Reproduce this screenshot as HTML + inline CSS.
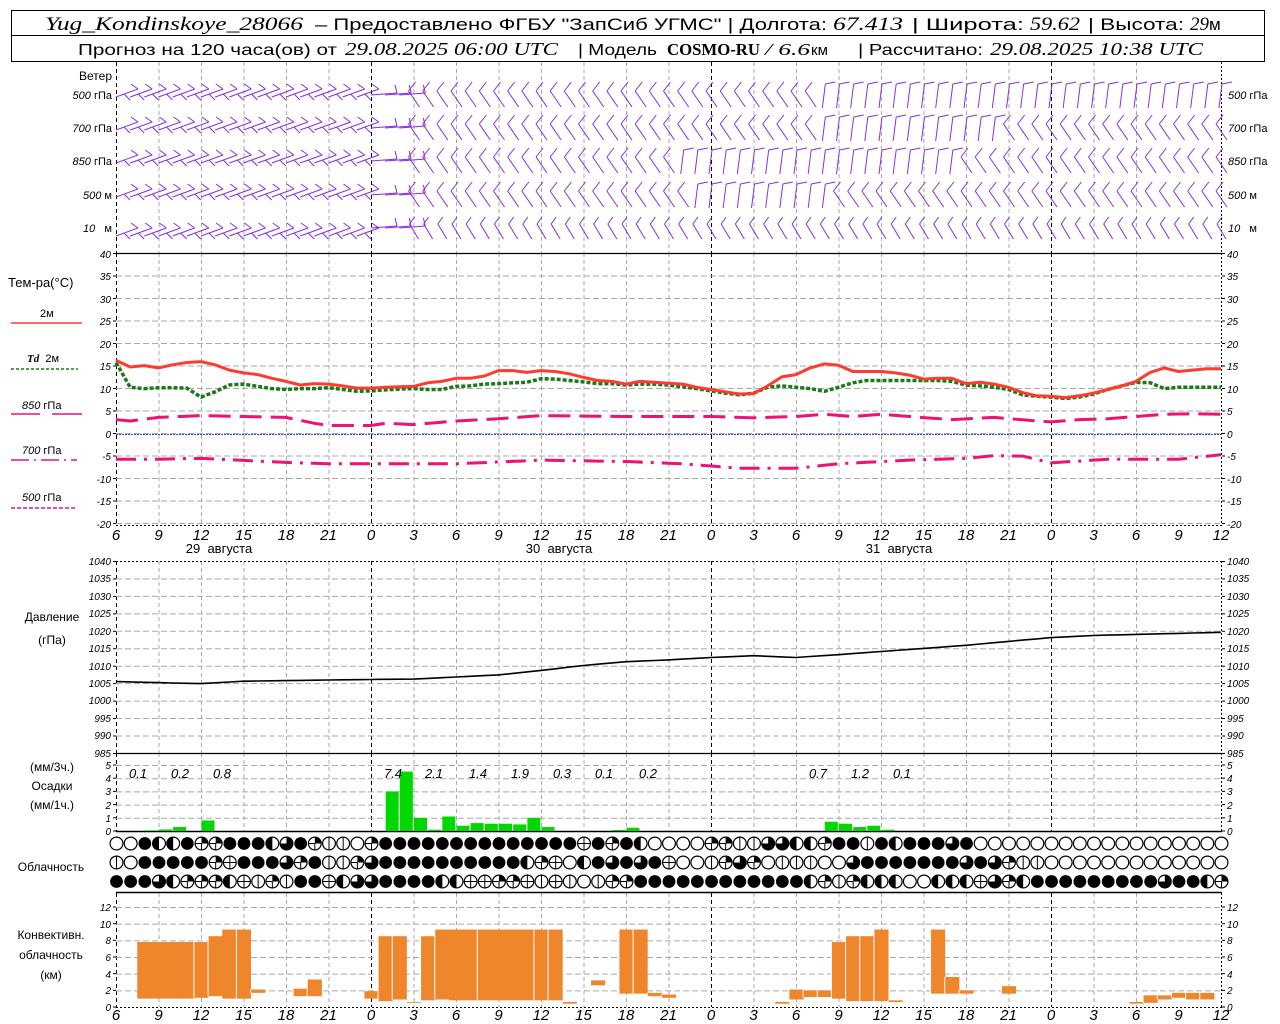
<!DOCTYPE html>
<html><head><meta charset="utf-8"><style>
html,body{margin:0;padding:0;background:#fff;width:1280px;height:1024px;overflow:hidden}
svg{display:block}
text{font-family:"Liberation Sans","DejaVu Sans",sans-serif;fill:#000}
.i{font-style:italic}
.s{font-family:"Liberation Serif","DejaVu Serif",serif}
.tk{font-size:10px;font-style:italic}
.tl{font-size:15px;font-style:italic}
.lb{font-size:12px}
</style></head><body>
<svg id="s" width="1280" height="1024" viewBox="0 0 1280 1024" xmlns="http://www.w3.org/2000/svg">
<rect x="11.5" y="10.5" width="1253" height="51" fill="none" stroke="#000"/>
<line x1="11" y1="35.5" x2="1265" y2="35.5" stroke="#000"/>
<text x="45" y="30" class="s i" font-size="19" textLength="258" lengthAdjust="spacingAndGlyphs">Yug_Kondinskoye_28066</text>
<text x="315" y="30" font-size="17" textLength="512" lengthAdjust="spacingAndGlyphs">– Предоставлено ФГБУ "ЗапСиб УГМС" | Долгота:</text>
<text x="833" y="30" class="s i" font-size="19" textLength="70" lengthAdjust="spacingAndGlyphs">67.413</text>
<text x="912" y="30" font-size="17" textLength="112" lengthAdjust="spacingAndGlyphs">| Широта:</text>
<text x="1030" y="30" class="s i" font-size="19" textLength="50" lengthAdjust="spacingAndGlyphs">59.62</text>
<text x="1088" y="30" font-size="17" textLength="96" lengthAdjust="spacingAndGlyphs">| Высота:</text>
<text x="1190" y="30" class="s i" font-size="19">29</text><text x="1209" y="30" font-size="17">м</text>
<text x="78" y="55" font-size="16" textLength="259" lengthAdjust="spacingAndGlyphs">Прогноз на 120 часа(ов) от</text>
<text x="345" y="55" class="s i" font-size="18" textLength="213" lengthAdjust="spacingAndGlyphs">29.08.2025 06:00 UTC</text>
<text x="578" y="55" font-size="16" textLength="79" lengthAdjust="spacingAndGlyphs">| Модель</text>
<text x="667" y="55" class="s" font-weight="bold" font-size="17" textLength="93" lengthAdjust="spacingAndGlyphs">COSMO-RU</text>
<text x="765" y="55" class="s i" font-size="17" textLength="45" lengthAdjust="spacingAndGlyphs">/ 6.6</text><text x="811" y="55" font-size="15">км</text>
<text x="858" y="55" font-size="16" textLength="125" lengthAdjust="spacingAndGlyphs">| Рассчитано:</text>
<text x="990" y="55" class="s i" font-size="18" textLength="213" lengthAdjust="spacingAndGlyphs">29.08.2025 10:38 UTC</text>

<g id="grid"></g>
<g id="plots"></g>

<text x="112" y="80" font-size="12" text-anchor="end">Ветер</text>
<text x="112" y="99" font-size="11" text-anchor="end"><tspan class="i">500</tspan> гПа</text>
<text x="112" y="132" font-size="11" text-anchor="end"><tspan class="i">700</tspan> гПа</text>
<text x="112" y="165" font-size="11" text-anchor="end"><tspan class="i">850</tspan> гПа</text>
<text x="112" y="199" font-size="11" text-anchor="end"><tspan class="i">500</tspan> м</text>
<text x="112" y="232" font-size="11" text-anchor="end"><tspan class="i">10</tspan>&#160;&#160;&#160;м</text>
<text x="1228" y="99" font-size="11"><tspan class="i">500</tspan> гПа</text>
<text x="1228" y="132" font-size="11"><tspan class="i">700</tspan> гПа</text>
<text x="1228" y="165" font-size="11"><tspan class="i">850</tspan> гПа</text>
<text x="1228" y="199" font-size="11"><tspan class="i">500</tspan> м</text>
<text x="1228" y="232" font-size="11"><tspan class="i">10</tspan>&#160;&#160;&#160;м</text>

<text x="8" y="287" font-size="13">Тем-ра(°C)</text>
<text x="40" y="317" font-size="11">2м</text>
<line x1="11" y1="323" x2="82" y2="323" stroke="#ff3b30" stroke-width="1.5"/>
<text x="27" y="362" font-size="11"><tspan class="i s" font-weight="bold">Td</tspan>&#160;&#160;2м</text>
<line x1="11" y1="369" x2="78" y2="369" stroke="#1a7a1a" stroke-width="1.5" stroke-dasharray="3,2"/>
<text x="22" y="409" font-size="11"><tspan class="i">850</tspan>&#160;гПа</text>
<line x1="11" y1="414" x2="40" y2="414" stroke="#ee1177" stroke-width="1.5"/><line x1="52" y1="414" x2="82" y2="414" stroke="#ee1177" stroke-width="1.5"/>
<text x="22" y="454" font-size="11"><tspan class="i">700</tspan>&#160;гПа</text>
<line x1="11" y1="460" x2="77" y2="460" stroke="#ee1177" stroke-width="1.5" stroke-dasharray="18,5,2,5"/>
<text x="22" y="501" font-size="11"><tspan class="i">500</tspan>&#160;гПа</text>
<line x1="11" y1="508" x2="77" y2="508" stroke="#ee1177" stroke-width="1.5" stroke-dasharray="4,2"/>

<text x="219" y="553" font-size="13" text-anchor="middle">29&#160;&#160;августа</text>
<text x="559" y="553" font-size="13" text-anchor="middle">30&#160;&#160;августа</text>
<text x="899" y="553" font-size="13" text-anchor="middle">31&#160;&#160;августа</text>

<text x="52" y="621" font-size="12" text-anchor="middle">Давление</text>
<text x="52" y="644" font-size="12" text-anchor="middle">(гПа)</text>
<text x="52" y="771" font-size="12" text-anchor="middle">(мм/3ч.)</text>
<text x="52" y="790" font-size="12" text-anchor="middle">Осадки</text>
<text x="52" y="809" font-size="12" text-anchor="middle">(мм/1ч.)</text>
<text x="51" y="871" font-size="12" text-anchor="middle">Облачность</text>
<text x="51" y="939" font-size="12" text-anchor="middle">Конвективн.</text>
<text x="51" y="959" font-size="12" text-anchor="middle">облачность</text>
<text x="51" y="979" font-size="12" text-anchor="middle">(км)</text>

<g font-size="13" font-style="italic">
<text x="138" y="778" text-anchor="middle">0.1</text>
<text x="180" y="778" text-anchor="middle">0.2</text>
<text x="222" y="778" text-anchor="middle">0.8</text>
<text x="393" y="778" text-anchor="middle">7.4</text>
<text x="434" y="778" text-anchor="middle">2.1</text>
<text x="478" y="778" text-anchor="middle">1.4</text>
<text x="520" y="778" text-anchor="middle">1.9</text>
<text x="562" y="778" text-anchor="middle">0.3</text>
<text x="604" y="778" text-anchor="middle">0.1</text>
<text x="648" y="778" text-anchor="middle">0.2</text>
<text x="818" y="778" text-anchor="middle">0.7</text>
<text x="860" y="778" text-anchor="middle">1.2</text>
<text x="902" y="778" text-anchor="middle">0.1</text>
</g>

<g class="tl">
<text x="116" y="540" text-anchor="middle">6</text><text x="158.5" y="540" text-anchor="middle">9</text><text x="201" y="540" text-anchor="middle">12</text><text x="243.5" y="540" text-anchor="middle">15</text><text x="286" y="540" text-anchor="middle">18</text><text x="328.5" y="540" text-anchor="middle">21</text><text x="371" y="540" text-anchor="middle">0</text><text x="413.5" y="540" text-anchor="middle">3</text><text x="456" y="540" text-anchor="middle">6</text><text x="498.5" y="540" text-anchor="middle">9</text><text x="541" y="540" text-anchor="middle">12</text><text x="583.5" y="540" text-anchor="middle">15</text><text x="626" y="540" text-anchor="middle">18</text><text x="668.5" y="540" text-anchor="middle">21</text><text x="711" y="540" text-anchor="middle">0</text><text x="753.5" y="540" text-anchor="middle">3</text><text x="796" y="540" text-anchor="middle">6</text><text x="838.5" y="540" text-anchor="middle">9</text><text x="881" y="540" text-anchor="middle">12</text><text x="923.5" y="540" text-anchor="middle">15</text><text x="966" y="540" text-anchor="middle">18</text><text x="1008.5" y="540" text-anchor="middle">21</text><text x="1051" y="540" text-anchor="middle">0</text><text x="1093.5" y="540" text-anchor="middle">3</text><text x="1136" y="540" text-anchor="middle">6</text><text x="1178.5" y="540" text-anchor="middle">9</text><text x="1221" y="540" text-anchor="middle">12</text>
<text x="116" y="1020" text-anchor="middle">6</text><text x="158.5" y="1020" text-anchor="middle">9</text><text x="201" y="1020" text-anchor="middle">12</text><text x="243.5" y="1020" text-anchor="middle">15</text><text x="286" y="1020" text-anchor="middle">18</text><text x="328.5" y="1020" text-anchor="middle">21</text><text x="371" y="1020" text-anchor="middle">0</text><text x="413.5" y="1020" text-anchor="middle">3</text><text x="456" y="1020" text-anchor="middle">6</text><text x="498.5" y="1020" text-anchor="middle">9</text><text x="541" y="1020" text-anchor="middle">12</text><text x="583.5" y="1020" text-anchor="middle">15</text><text x="626" y="1020" text-anchor="middle">18</text><text x="668.5" y="1020" text-anchor="middle">21</text><text x="711" y="1020" text-anchor="middle">0</text><text x="753.5" y="1020" text-anchor="middle">3</text><text x="796" y="1020" text-anchor="middle">6</text><text x="838.5" y="1020" text-anchor="middle">9</text><text x="881" y="1020" text-anchor="middle">12</text><text x="923.5" y="1020" text-anchor="middle">15</text><text x="966" y="1020" text-anchor="middle">18</text><text x="1008.5" y="1020" text-anchor="middle">21</text><text x="1051" y="1020" text-anchor="middle">0</text><text x="1093.5" y="1020" text-anchor="middle">3</text><text x="1136" y="1020" text-anchor="middle">6</text><text x="1178.5" y="1020" text-anchor="middle">9</text><text x="1221" y="1020" text-anchor="middle">12</text>
</g>

<g class="tk">
<text x="111" y="258" text-anchor="end">40</text><text x="111" y="280" text-anchor="end">35</text><text x="111" y="303" text-anchor="end">30</text><text x="111" y="325" text-anchor="end">25</text><text x="111" y="348" text-anchor="end">20</text><text x="111" y="370" text-anchor="end">15</text><text x="111" y="393" text-anchor="end">10</text><text x="111" y="415" text-anchor="end">5</text><text x="111" y="438" text-anchor="end">0</text><text x="111" y="460" text-anchor="end">-5</text><text x="111" y="483" text-anchor="end">-10</text><text x="111" y="505" text-anchor="end">-15</text><text x="111" y="528" text-anchor="end">-20</text>
<text x="1227" y="258">40</text><text x="1227" y="280">35</text><text x="1227" y="303">30</text><text x="1227" y="325">25</text><text x="1227" y="348">20</text><text x="1227" y="370">15</text><text x="1227" y="393">10</text><text x="1227" y="415">5</text><text x="1227" y="438">0</text><text x="1227" y="460">-5</text><text x="1227" y="483">-10</text><text x="1227" y="505">-15</text><text x="1227" y="528">-20</text>
<text x="111" y="565" text-anchor="end">1040</text><text x="111" y="582" text-anchor="end">1035</text><text x="111" y="600" text-anchor="end">1030</text><text x="111" y="617" text-anchor="end">1025</text><text x="111" y="635" text-anchor="end">1020</text><text x="111" y="652" text-anchor="end">1015</text><text x="111" y="670" text-anchor="end">1010</text><text x="111" y="687" text-anchor="end">1005</text><text x="111" y="704" text-anchor="end">1000</text><text x="111" y="722" text-anchor="end">995</text><text x="111" y="739" text-anchor="end">990</text><text x="111" y="757" text-anchor="end">985</text>
<text x="1227" y="565">1040</text><text x="1227" y="582">1035</text><text x="1227" y="600">1030</text><text x="1227" y="617">1025</text><text x="1227" y="635">1020</text><text x="1227" y="652">1015</text><text x="1227" y="670">1010</text><text x="1227" y="687">1005</text><text x="1227" y="704">1000</text><text x="1227" y="722">995</text><text x="1227" y="739">990</text><text x="1227" y="757">985</text>
<text x="111" y="769" text-anchor="end">5</text><text x="111" y="782" text-anchor="end">4</text><text x="111" y="795" text-anchor="end">3</text><text x="111" y="809" text-anchor="end">2</text><text x="111" y="822" text-anchor="end">1</text><text x="111" y="835" text-anchor="end">0</text>
<text x="1227" y="769">5</text><text x="1227" y="782">4</text><text x="1227" y="795">3</text><text x="1227" y="809">2</text><text x="1227" y="822">1</text><text x="1227" y="835">0</text>
<text x="111" y="911" text-anchor="end">12</text><text x="111" y="928" text-anchor="end">10</text><text x="111" y="944" text-anchor="end">8</text><text x="111" y="961" text-anchor="end">6</text><text x="111" y="978" text-anchor="end">4</text><text x="111" y="994" text-anchor="end">2</text><text x="111" y="1011" text-anchor="end">0</text>
<text x="1227" y="911">12</text><text x="1227" y="928">10</text><text x="1227" y="944">8</text><text x="1227" y="961">6</text><text x="1227" y="978">4</text><text x="1227" y="994">2</text><text x="1227" y="1011">0</text>
</g>
</svg>
<script>
(function(){
var NS="http://www.w3.org/2000/svg";
var G=document.getElementById("grid"),P=document.getElementById("plots");
function el(g,t,a){var e=document.createElementNS(NS,t);for(var k in a)e.setAttribute(k,a[k]);g.appendChild(e);return e;}
function X(h){return 116+h*14.1667;}
function line(g,x1,y1,x2,y2,c,w,d){var a={x1:x1,y1:y1,x2:x2,y2:y2,stroke:c,"stroke-width":w||1};if(d)a["stroke-dasharray"]=d;return el(g,"line",a);}
function vgrid(y1,y2){for(var k=0;k<=24;k++){var h=3*k;var x=X(h)+.5;var day=((h+6)%24==0)||k==0;line(G,x,y1,x,y2,day?"#000":"#aaa",1,"4,3");}line(G,X(78)+.5,y1,X(78)+.5,y2,"#000",1,"2,2");}
vgrid(62,253);vgrid(253,525);vgrid(561,753);vgrid(753,831);vgrid(893,1007);
for(var i=1;i<=12;i++){line(G,116,253.5+i*22.5,1222,253.5+i*22.5,"#aaa",1,"6,3");}
for(i=1;i<12;i++){line(G,116,561.5+i*17.45,1222,561.5+i*17.45,"#aaa",1,"6,3");}
for(i=1;i<=5;i++){line(G,116,831.5-i*13.2,1222,831.5-i*13.2,"#aaa",1,"6,3");}
for(i=1;i<=6;i++){line(G,116,1007.5-i*16.67,1222,1007.5-i*16.67,"#aaa",1,"6,3");}
line(G,116,253.5,1222,253.5,"#000",1.2);line(G,116,525.5,1222,525.5,"#000",1,"2,2");
line(G,116,561.5,1222,561.5,"#000",1,"2,2");line(G,116,753.5,1222,753.5,"#000",1.2);
line(G,116,831.5,1222,831.5,"#000",1.5);line(G,116,892.5,1222,892.5,"#000",1.5);line(G,116,1007.5,1222,1007.5,"#000",1,"2,2");
line(G,116,434.5,1222,434.5,"#2244ff",1,"2,1");
function ticks(y0,y1,step){for(var y=y0;y<=y1+0.1;y+=step){line(G,113,y,116,y,"#000");line(G,1222,y,1225,y,"#000");}}
ticks(253.5,526,22.5);ticks(561.5,754,17.45);ticks(765,832,13.2);ticks(907,1008,16.67);
function interp(kp){var r=[];for(var h=0;h<=78;h++){for(var j=0;j<kp.length-1;j++){if(h>=kp[j][0]&&h<=kp[j+1][0]){var t=(h-kp[j][0])/(kp[j+1][0]-kp[j][0]||1);r.push(kp[j][1]+t*(kp[j+1][1]-kp[j][1]));break;}}}return r;}
function poly(vals,fy,c,w,d){var p=[];for(var h=0;h<vals.length;h++)p.push(X(h).toFixed(1)+","+fy(vals[h]).toFixed(1));var a={points:p.join(" "),fill:"none",stroke:c,"stroke-width":w,"stroke-linejoin":"round"};if(d)a["stroke-dasharray"]=d;el(P,"polyline",a);}
var TY=function(v){return 434.5-4.5*v;};
var T=[16.5,15,15.3,14.8,15.5,16,16.2,15.5,14.3,13.7,13.3,12.5,11.8,11,11.3,11.2,10.8,10.3,
10.3,10.5,10.6,10.7,11.5,11.8,12.5,12.5,13,14.2,14.2,13.8,14.2,14,13.5,12.7,12,11.8,11.2,11.8,11.6,11.4,11.2,10.5,
10,9.5,9,9.1,10.8,12.8,13.3,14.8,15.7,15.4,14,14,14,13.7,13.2,12.3,12.5,12.5,11.3,11.6,11.2,10.5,9.3,8.6,
8.5,8.2,8.6,9.2,10,10.8,11.8,13.8,14.8,14,14.3,14.6,14.6];
var Td=[16,10.5,10.2,10.4,10.4,10.3,8.3,9.5,11,11.2,10.7,10.2,10,10.2,10.2,10.4,10,9.6,
9.7,9.9,10.1,10.2,10,10,10.7,10.8,11.2,11.3,11.5,11.6,12.4,12.3,12,11.7,11.3,11.3,11,11.2,11.2,11,10.6,10.2,
9.7,9.2,8.8,9.2,10.5,10.8,10.5,10.2,9.6,10.5,11.5,12,12,12,12,12,12,11.8,11,10.8,10.5,10,8.8,8.5,
8.3,8,8.3,9,10,10.8,11.6,11.5,10.2,10.5,10.5,10.5,10.5];
var t850=interp([[0,3.3],[1,3],[3,3.8],[6,4.2],[9,4],[12,3.8],[14,2.5],[15,2],[18,2],[19,2.5],[21,2.2],[24,3],[27,3.5],[30,4.2],[36,4],[42,4],[45,3.7],[48,4],[50,4.5],[52,4],[54,4.5],[56,4],[59,3.3],[62,3.8],[65,3],[66,2.8],[68,3.3],[70,3.5],[72,4],[74,4.5],[76,4.6],[78,4.5]]);
var t700=interp([[0,-5.5],[3,-5.5],[6,-5.3],[12,-6.2],[15,-6.5],[24,-6.5],[30,-5.7],[36,-6],[40,-6.5],[44,-7.5],[48,-7.5],[51,-6.5],[56,-5.7],[60,-5.3],[62,-4.7],[64,-4.8],[66,-6.3],[70,-5.5],[75,-5.5],[78,-4.5]]);
poly(t850,TY,"#ee1177",3,"22,9");
poly(t700,TY,"#ee1177",3,"20,8,3,8");
poly(Td,TY,"#1a7a1a",3.5,"4,2");
poly(T,TY,"#ff3b30",3);
var pr=interp([[0,1005.6],[6,1005],[9,1005.7],[18,1006.2],[21,1006.3],[27,1007.5],[30,1008.8],[33,1010.2],[36,1011.3],[39,1011.8],[42,1012.5],[45,1013],[48,1012.5],[51,1013.3],[55,1014.5],[60,1016],[66,1018.2],[69,1018.8],[78,1019.7]]);
poly(pr,function(v){return 561.5+(1040-v)*3.49;},"#000",1.6);
var pc=[[2,.05],[3,.12],[4,.3],[6,.8],[19,3],[20,4.5],[21,1],[22,.1],[23,1.1],[24,.4],[25,.6],[26,.55],[27,.55],[28,.5],[29,1],[30,.3],[35,.08],[36,.25],[50,.7],[51,.55],[52,.3],[53,.4],[54,.1]];
pc.forEach(function(b){var h=b[1]*13.2;el(P,"rect",{x:X(b[0])+.5,y:831-h,width:13,height:h,fill:"#00d800"});});
var cv=[[2,1,7.8],[3,1,7.8],[4,1,7.8],[5,1,7.8],[6,1.1,7.8],[7,1.3,8.5],[8,1,9.3],[9,1,9.3],[10,1.7,2.1],[13,1.3,2.2],[14,1.3,3.3],[18,1,1.9],[19,.7,8.5],[20,.9,8.5],[21,.5,.6],[22,.8,8.5],[23,.9,9.3],[24,.8,9.3],[25,.8,9.3],[26,.8,9.3],[27,.8,9.3],[28,.8,9.3],[29,.8,9.3],[30,.8,9.3],[31,.8,9.3],[32,.4,.6],[34,2.6,3.2],[36,1.6,9.3],[37,1.6,9.3],[38,1.3,1.7],[39,1.1,1.5],[47,.4,.6],[48,.9,2.1],[49,1.2,2],[50,1.2,2],[51,1,7.8],[52,.7,8.5],[53,.7,8.5],[54,.7,9.3],[55,.6,.8],[58,1.6,9.3],[59,1.6,3.6],[60,1.6,2],[63,1.6,2.5],[72,.4,.6],[73,.5,1.4],[74,.9,1.4],[75,1.1,1.7],[76,.9,1.7],[77,.9,1.7]];
var merge={2:1,3:1,4:1,5:1,8:1,24:1,25:1,27:1,28:1,29:1};
cv.forEach(function(b){var y1=1007-8.33*b[2],y2=1007-8.33*b[1];el(P,"rect",{x:X(b[0]-.5),y:y1,width:14.6,height:y2-y1,fill:"#f0862c"});if(!merge[b[0]])line(P,X(b[0]-.5),y1,X(b[0]-.5),y2,"#fff",1);});
var rows=[
"oofhhfqqfffh3fqvvoqffffffffffffffefqfhooooqqvv33hhqffvfhfff3foooooooooooooooooo",
"vofffffqefff3qfvvq3ffffffffffhqeohf3f3feoovq3qovvvoo3fffffff3f3qvvooooooooooooo",
"fff3hqqqhevqvffeh33ffffhheeqqevevovqqffffffffffffhqvqhhhoohhhe3qhfffffffff3ffhqf"];
var cy=[843.5,862.5,881.5],r=6.4;
rows.forEach(function(s,ri){for(var i=0;i<79;i++){var c=s.charAt(i)||"o";var x=X(i)+.5,y=cy[ri];
 if(c=="f"){el(P,"circle",{cx:x,cy:y,r:r,fill:"#000"});continue;}
 el(P,"circle",{cx:x,cy:y,r:r,fill:"#fff",stroke:"#000","stroke-width":1.2});
 if(c=="h"){el(P,"path",{d:"M"+x+","+(y-r)+" A"+r+","+r+" 0 0 0 "+x+","+(y+r)+"Z",fill:"#000"});}
 if(c=="q"){el(P,"path",{d:"M"+x+","+y+" L"+x+","+(y-r)+" A"+r+","+r+" 0 0 1 "+(x+r)+","+y+"Z",fill:"#000"});line(P,x,y,x,y+r,"#000",1);line(P,x-r,y,x,y,"#000",1);}
 if(c=="3"){el(P,"path",{d:"M"+x+","+y+" L"+x+","+(y-r)+" A"+r+","+r+" 0 1 1 "+(x-r)+","+y+"Z",fill:"#000"});}
 if(c=="v"){line(P,x,y-r,x,y+r,"#000",1);}
 if(c=="e"){line(P,x-r,y,x+r,y,"#000",1);line(P,x,y-r,x,y+r,"#000",1);}
}});
var W="#8a2be2";var wy=[95,128,161,195,228];
function seg(a,b,c,d){line(P,a,b,c,d,W,1);}
function barb(x,y,t){
 if(t=="A"){seg(x,y+2,x+22,y-6);seg(x+22,y-6,x+15,y-11);seg(x+8,y-1,x+14,y+5);}
 else if(t=="F"){seg(x,y,x+26,y-2);seg(x+26,y-2,x+24,y-10);}
 else if(t=="B"){seg(x+6,y+12,x-5,y-4);seg(x-5,y-4,x+2,y-13);}
 else if(t=="C"){seg(x-2,y+13,x+1,y-11);seg(x+1,y-11,x+11,y-13);}
 else if(t=="D"){seg(x+5,y+11,x-4,y-4);seg(x-4,y-4,x+1,y-11);}
}
for(var ri=0;ri<5;ri++){for(var h=0;h<=78;h++){var t,x=X(h),y=wy[ri];
 if(h<18)t="A";else if(h<21)t="F";
 else if(ri==0)t=h<50?"B":"C";
 else if(ri==1)t=(h>=50&&h<63)?"C":"B";
 else if(ri==2)t=(h>=40&&h<60)?"C":"B";
 else if(ri==3)t=(h>=41&&h<51)?"C":"B";
 else t="D";
 if(ri==4&&h<18)y+=6;
 barb(x,y,t);}}
})();
</script>
</body></html>
